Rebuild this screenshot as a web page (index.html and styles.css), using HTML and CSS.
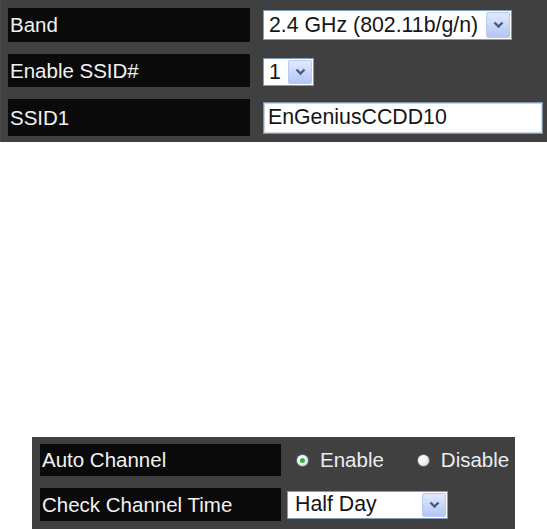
FILE: index.html
```html
<!DOCTYPE html>
<html lang="en">
<head>
  <meta charset="UTF-8">
  <title>Wireless Settings</title>
  <link rel="stylesheet" href="styles.css">
</head>
<body>
  <div class="panel basic">
    <div class="label">Band</div>
    <div class="value">
      <div class="select band">
        <span class="text">2.4 GHz (802.11b/g/n)</span>
        <span class="arrow"><svg width="11" height="8" viewBox="0 0 11 8"><path d="M1.5 1.5 L5.5 5.5 L9.5 1.5" fill="none" stroke="#4a5a82" stroke-width="2.4"/></svg></span>
      </div>
    </div>

    <div class="label">Enable SSID#</div>
    <div class="value">
      <div class="select num">
        <span class="text">1</span>
        <span class="arrow"><svg width="11" height="8" viewBox="0 0 11 8"><path d="M1.5 1.5 L5.5 5.5 L9.5 1.5" fill="none" stroke="#4a5a82" stroke-width="2.4"/></svg></span>
      </div>
    </div>

    <div class="label">SSID1</div>
    <div class="value">
      <input class="field" type="text" value="EnGeniusCCDD10">
    </div>
  </div>

  <div class="panel channel">
    <div class="label">Auto Channel</div>
    <div class="value radios">
      <span class="radio on"></span><span class="rlabel">Enable</span>
      <span class="radio"></span><span class="rlabel">Disable</span>
    </div>

    <div class="label">Check Channel Time</div>
    <div class="value">
      <div class="select time">
        <span class="text">Half Day</span>
        <span class="arrow"><svg width="11" height="8" viewBox="0 0 11 8"><path d="M1.5 1.5 L5.5 5.5 L9.5 1.5" fill="none" stroke="#4a5a82" stroke-width="2.4"/></svg></span>
      </div>
    </div>
  </div>
</body>
</html>
```

FILE: styles.css
```css
body {
  margin: 0;
  background-color: #ffffff;
  font-family: 'Liberation Sans', Arial, sans-serif;
}
.panel {
  background-color: #404040;
  display: grid;
}
.basic {
  width: 535px;
  padding: 8px 4px 6px 7px;
  grid-template-columns: 242px 280px;
  grid-template-rows: 34px 33px 37px;
  column-gap: 13px;
  row-gap: 12px;
  border-left: 1px solid #4a4a4a;
}
.channel {
  width: 475px;
  margin: 295px 0 0 32px;
  padding: 7px 0 8px 8px;
  grid-template-columns: 241px 228px;
  grid-template-rows: 32px 33px;
  column-gap: 6px;
  row-gap: 12px;
}
.label {
  background-color: #0a0a0a;
  color: #f2f2f2;
  font-size: 20.5px;
  padding-left: 2px;
  display: flex;
  align-items: center;
}
.value {
  display: flex;
  align-items: center;
}
.select {
  box-sizing: border-box;
  display: flex;
  align-items: center;
  justify-content: space-between;
  background-color: #ffffff;
  border: 1px solid #7f9db9;
  padding: 0 1px 0 5px;
  font-size: 21.3px;
  color: #151515;
}
.band { width: 249px; height: 30px; }
.num { width: 51px; height: 28px; margin-top: 3px; }
.time { width: 161px; height: 28px; padding-left: 7px; }
.arrow {
  box-sizing: border-box;
  flex-shrink: 0;
  width: 24px;
  height: 24px;
  display: flex;
  align-items: center;
  justify-content: center;
  border: 1px solid #b9c9ef;
  border-radius: 2px;
  background: linear-gradient(#e1eafe, #b3c5f3);
}
.band .arrow { height: 26px; }
.field {
  box-sizing: border-box;
  width: 280px;
  height: 32px;
  border: 1px solid #7f95ad;
  box-shadow: inset 0 0 0 1px #c9d5e3;
  padding: 0 4px;
  font-family: 'Liberation Sans', Arial, sans-serif;
  font-size: 21.3px;
  color: #151515;
  outline: none;
}
.radios {
  color: #e9eef4;
  font-size: 20.5px;
  padding-left: 9px;
}
.radio {
  box-sizing: border-box;
  flex-shrink: 0;
  width: 13px;
  height: 13px;
  border-radius: 50%;
  border: 1px solid #5e6f86;
  background: radial-gradient(circle at 35% 35%, #ffffff 0%, #f2f2f2 45%, #c9ccd1 100%);
  margin-right: 11px;
  display: flex;
  align-items: center;
  justify-content: center;
}
.radio.on::after {
  content: "";
  width: 5px;
  height: 5px;
  border-radius: 50%;
  background-color: #2fb33a;
}
.rlabel {
  margin-right: 33px;
}
```
